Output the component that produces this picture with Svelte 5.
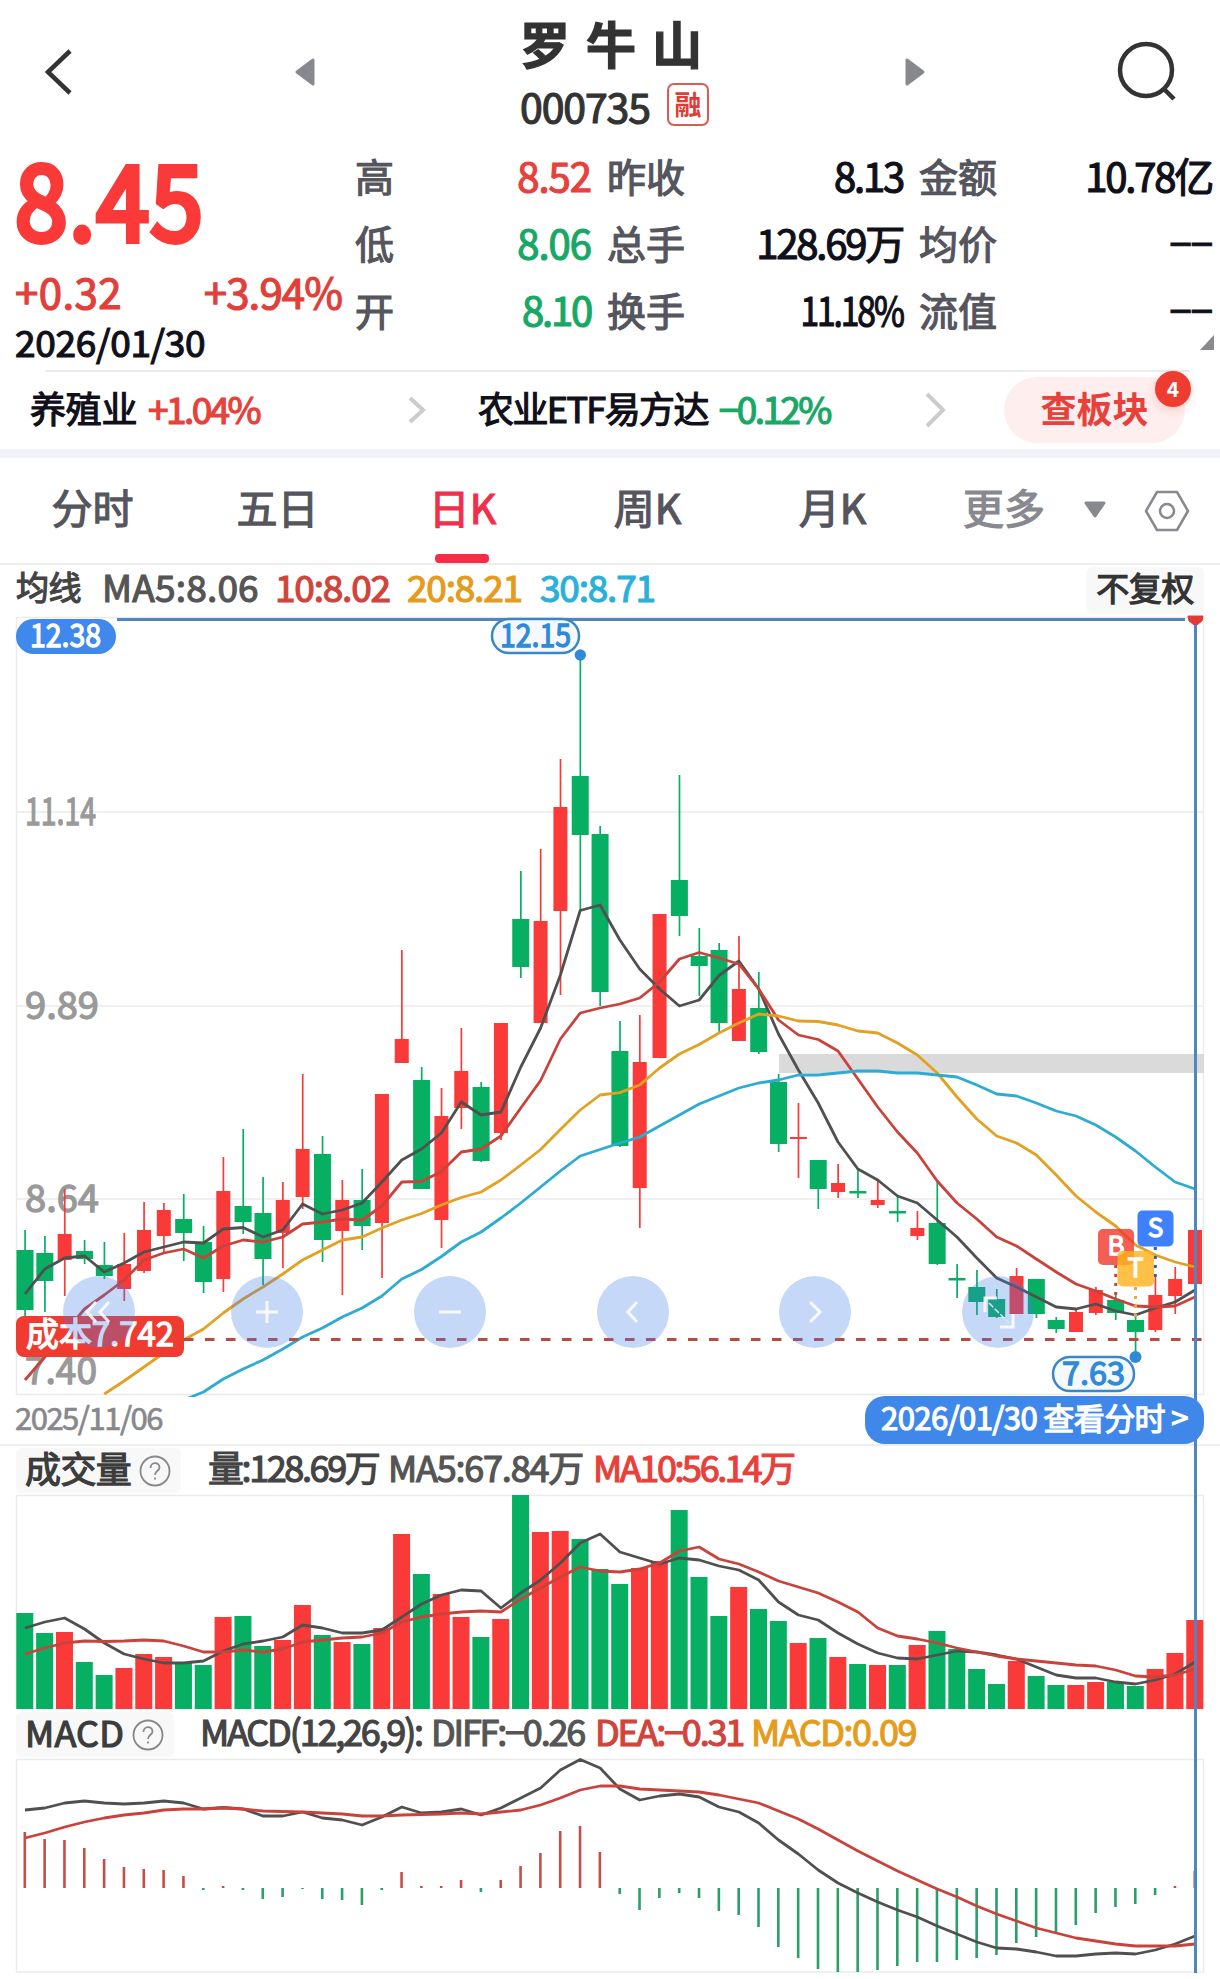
<script>
    const left = 25, step = 19.83
    const px = i => left + i * step
    const line = (list, start = 0) => list.map((y, i) => `${px(i + start).toFixed(1)},${y}`).join(" ")

    // high, body top, body bottom, low, 1 = up / 0 = down
    const candles = [
        [1230,1250,1310,1318,0],[1236,1253,1281,1312,0],[1189,1234,1260,1296,1],[1240,1251,1259,1264,0],[1242,1265,1276,1279,0],
        [1233,1264,1289,1301,1],[1202,1230,1271,1273,1],[1203,1210,1236,1252,1],[1194,1219,1233,1261,0],[1226,1242,1282,1293,0],
        [1157,1191,1279,1292,1],[1129,1206,1222,1234,0],[1177,1213,1259,1285,0],[1182,1200,1233,1268,1],[1074,1149,1197,1209,1],
        [1136,1154,1240,1262,0],[1180,1200,1231,1295,1],[1169,1200,1226,1250,0],[1094,1094,1223,1278,1],[950,1039,1063,1063,1],
        [1067,1080,1189,1189,0],[1088,1116,1220,1248,1],[1028,1071,1108,1129,1],[1082,1087,1161,1162,0],[1023,1023,1133,1140,1],
        [871,919,967,978,0],[849,921,1023,1023,1],[759,807,911,995,1],[655,776,835,910,0],[826,834,992,1006,0],
        [1021,1051,1146,1147,0],[1015,1062,1188,1228,1],[914,914,1058,1058,1],[775,880,916,936,0],[928,956,966,996,0],
        [943,950,1023,1033,0],[936,989,1041,1041,1],[972,1008,1052,1054,0],[1074,1082,1144,1152,0],[1103,1137,1139,1178,1],
        [1160,1160,1189,1209,0],[1164,1183,1192,1198,1],[1168,1191,1193.5,1198,0],[1180,1200,1205,1208,1],[1197,1211,1213.5,1222,0],
        [1211,1228,1236,1240,1],[1182,1223,1264,1265,0],[1264,1278,1280.5,1298,0],[1270,1287,1302,1315,0],[1289,1299,1317,1318,0],
        [1268,1276,1314,1314,1],[1279,1279,1314,1318,0],[1317,1320,1329,1333,0],[1310,1312,1332,1332,1],[1287,1290,1313,1315,1],
        [1293,1300,1313,1320,0],[1316,1320,1332,1357,0],[1276,1295,1330,1332,1],[1267,1279,1296,1314,1],[1230,1230,1284,1284,1]
    ]
    const ma5 = [1294,1269,1258,1256,1272,1263,1252,1247,1242,1243,1229,1227.5,1237,1230,1204,1214,1210,1203,1182,1160,1149,1133,1102,1115,1112,1067,1028,975,910.5,905,940,969,989,1006,1000,975.5,961,989,1034,1070,1103,1142,1169,1180,1196,1203,1220,1237,1258,1278,1287,1297,1307,1309,1304,1311,1315,1308,1302,1290]
    const ma10 = [1380,1357,1333,1309,1295,1280,1260,1253,1249,1258,1246,1240,1242,1237,1224,1222,1219,1220,1206,1182,1181.5,1171.5,1152,1149,1136,1108,1080.5,1039,1013,1008,1004,998,982,959,952.5,958,964,989,1020,1035,1039.5,1051,1079,1107,1132,1153,1181,1203,1219,1237,1246,1259,1272,1284,1291,1299,1306,1307,1306,1297]
    const ma20 = [1394,1381,1367,1353,1340,1329,1313,1299,1287,1274,1260,1250,1240,1237,1228,1220,1213.5,1205,1197.5,1192,1180,1165,1149.5,1129.5,1110,1095,1092.6,1085,1068,1054,1044.5,1033,1023,1014,1016,1021,1021.5,1025,1031,1033,1043,1055,1073,1097,1119,1136,1143,1155,1175,1196,1212,1226,1245,1255,1262,1267]
    const ma30 = [1400,1392,1379,1369,1360,1349,1337,1328,1317,1308,1296,1279,1269.5,1256.5,1242,1232,1218,1203,1187,1171,1156,1149.5,1143,1137,1126,1115,1104,1096,1088,1083,1080,1075,1075,1073,1071,1071,1073,1073,1075,1077,1085,1094,1096,1103,1111,1116,1125,1137,1151,1167,1182,1189]

    const volume = [1613,1633,1632,1662,1675,1668,1654,1657,1663,1665,1617,1616,1646,1640,1605,1635,1642,1644,1628,1534,1574,1594,1617,1637,1619,1495,1532,1531,1539,1569,1584,1568,1561,1510,1577,1616,1587,1609,1621,1643,1638,1657,1664,1665,1665,1645,1631,1649,1669,1684,1661,1676,1685,1685,1682,1682,1686,1669,1653,1620]
    const vol5 = [1628,1622,1618,1629,1643,1654,1659,1663,1663,1661,1651,1644,1641,1637,1625,1628,1633,1633,1630,1617,1604,1595,1590,1591,1608,1593,1580,1563,1543,1534,1552,1558,1564,1558,1560,1566,1570,1580,1602,1615,1620,1633,1644,1653,1658,1659,1655,1651,1652,1655,1659,1667,1675,1678,1678,1682,1684,1680,1674,1662]
    const vol10 = [1654,1648,1643,1641,1641.5,1641,1640,1641,1646,1652,1652,1650,1652,1649,1642,1640,1638,1637,1633,1622,1617,1614,1612,1611,1612,1599,1588,1577,1567,1571,1572,1569,1563,1551,1547,1559,1564,1572,1581,1587,1593,1602,1612,1628,1636,1639,1643,1648,1652,1656,1659,1661,1663,1665,1666,1670,1676,1677,1675,1669]

    const zero = 1888
    const macd = [1832,1839,1840,1848,1859,1867,1869,1870,1876,1890,1886,1890,1899,1897,1889,1899,1900,1905,1890,1872,1886,1886,1880,1892,1880,1866,1853,1831,1826,1852,1894,1910,1898,1893,1898,1911,1915,1927,1947,1958,1969,1972,1972,1970,1966,1962,1962,1960,1958,1955,1943,1937,1933,1925,1913,1907,1904,1895,1886,1871]
    const diff = [1810,1808,1803,1801,1803,1804,1803,1801,1803,1809,1807.5,1809,1816,1816,1812,1818,1820,1825,1817,1807,1813,1812,1809,1815,1808,1798,1788,1770,1759.5,1768,1789,1800,1796,1794,1797,1807,1812,1823,1840,1854,1870,1883,1893,1902,1910,1917,1926,1934,1942,1948,1949,1952,1956,1956,1954,1953,1954,1950,1944,1936]
    const dea = [1838,1833,1827,1822,1818,1815,1813,1810,1809,1809,1808,1809,1811,1811.5,1812,1813,1814,1816,1816,1815,1814.5,1814,1813,1814,1812,1810,1805,1798,1790,1786,1786,1789,1790,1791,1792,1795,1799,1803,1811,1819,1829,1840,1851,1861,1871,1880,1889,1897,1906,1914,1921,1928,1933,1938,1941,1944,1946,1946,1946,1944]

    const stats = [
        ["高", "8.52", "red"], ["昨收", "8.13", "snug"], ["金额", "10.78亿", "snug"],
        ["低", "8.06", "green"], ["总手", "128.69万", "snug"], ["均价", "−−", "dash"],
        ["开", "8.10", "green snug"], ["换手", "11.18%", "tight"], ["流值", "−−", "dash"]
    ]
    let tabs = ["分时", "五日", "日K", "周K", "月K"]
    let active = "日K"
    const controls = [
        { x: 99, d: "M-3 -10 L-12 0 L-3 10 M10 -10 L1 0 L10 10" },
        { x: 267, d: "M-11 0 H11 M0 -11 V11" },
        { x: 450, d: "M-11 0 H11" },
        { x: 633, d: "M4 -10 L-5 0 L4 10" },
        { x: 815, d: "M-5 -10 L5 0 L-5 10" },
        { x: 998, d: "M-13 0 V-14 H-1 M2 15 H15 V2" }
    ]
</script>

<div class="page">
    <header>
        <svg class="back" width="40" height="60" viewBox="0 0 40 60"><path d="M34 9 L12 30 L34 51" /></svg>
        <svg class="prev" width="24" height="32" viewBox="0 0 24 32"><path d="M20 4 V28 L4 16 Z" /></svg>
        <div class="title">
            <h1>罗牛山</h1>
            <div class="code"><span>000735</span><i>融</i></div>
        </div>
        <svg class="next" width="24" height="32" viewBox="0 0 24 32"><path d="M4 4 V28 L20 16 Z" /></svg>
        <svg class="search" width="64" height="64" viewBox="0 0 64 64"><circle cx="30" cy="30" r="26" /><path d="M47 48 L58 59" /></svg>
    </header>

    <section class="quote">
        <div class="last">
            <div class="price">8.45</div>
            <div class="change"><span>+0.32</span><span class="pct">+3.94%</span></div>
            <div class="day">2026/01/30</div>
        </div>
        <div class="stats">
            {#each stats as [name, value, color]}
                <span class="name">{name}</span><span class="value {color}">{value}</span>
            {/each}
        </div>
        <svg class="corner" width="14" height="15"><path d="M14 0 V15 H0 Z" /></svg>
    </section>

    <section class="sectors">
        <div class="sector"><span>养殖业</span><b class="red">+1.04%</b></div>
        <svg class="chev" width="20" height="34" viewBox="0 0 20 34"><path d="M3 5 L16 17 L3 29" /></svg>
        <div class="sector second"><span>农业ETF易方达</span><b class="green">−0.12%</b></div>
        <svg class="chev" width="24" height="38" viewBox="0 0 24 38"><path d="M4 3 L20 19 L4 35" /></svg>
        <button class="plate"><span>查板块</span><em>4</em></button>
    </section>

    <nav>
        {#each tabs as tab}
            <button class:active={tab === active}>{tab}</button>
        {/each}
        <button class="more">更多</button>
        <svg class="caret" width="24" height="20" viewBox="0 0 24 20"><path d="M3 3 H21 L12 16 Z" /></svg>
        <svg class="gear" width="48" height="44" viewBox="0 0 48 44"><path d="M14 3 H34 L45 22 L34 41 H14 L3 22 Z" /><circle cx="24" cy="22" r="7" /></svg>
    </nav>

    <div class="legend ma">
        <span class="cn">均线</span>
        <span class="grey">MA5:8.06</span>
        <span class="crimson">10:8.02</span>
        <span class="amber">20:8.21</span>
        <span class="cyan">30:8.71</span>
        <button>不复权</button>
    </div>

    <div class="charts">
        <svg class="kline" width="1220" height="782" viewBox="0 615 1220 782">
            <g class="frame">
                <rect x="16.5" y="617.5" width="1187" height="777" />
                <path d="M17 812 H1204 M17 1006 H1204 M17 1199 H1204" />
            </g>
            <rect class="gap" x="779" y="1054" width="425" height="19" />
            <g class="axis">
                <text x="25" y="825" textLength="71" lengthAdjust="spacingAndGlyphs">11.14</text>
                <text x="25" y="1019" textLength="74" lengthAdjust="spacingAndGlyphs">9.89</text>
                <text x="25" y="1212" textLength="74" lengthAdjust="spacingAndGlyphs">8.64</text>
                <text x="25" y="1384" textLength="72" lengthAdjust="spacingAndGlyphs">7.40</text>
            </g>
            {#each candles as [high, top, bottom, low, up], i}
                <g class={up ? "up" : "down"}>
                    <rect x={px(i) - 0.75} y={high} width="1.7" height={low - high} />
                    {#if up && bottom - top > 3}
                        <rect x={px(i) - 7} y={top} width="14" height={bottom - top} />
                    {:else}
                        <rect x={px(i) - 8.5} y={top} width="17" height={bottom - top} />
                    {/if}
                </g>
            {/each}
            <g class="line">
                <polyline class="l5" points={line(ma5)} />
                <polyline class="l10" points={line(ma10)} />
                <polyline class="l20" points={line(ma20, 4)} />
                <polyline class="l30" points={line(ma30, 8)} />
            </g>
            <path class="cost-line" d="M184 1339.5 H1202" />
            <rect class="cost" x="16" y="1316" width="168" height="41" rx="8" />
            <text class="cost-text" x="26" y="1346" textLength="148" lengthAdjust="spacingAndGlyphs">成本7.742</text>

            <path class="cross" d="M117 619.5 H1185" />
            <path class="pin" d="M1188 616 H1203 L1202 621 L1195.5 626 L1189 621 Z" />
            <rect class="pill" x="16" y="619" width="100" height="35" rx="17.5" />
            <text class="pill-text" x="30" y="647" textLength="71" lengthAdjust="spacingAndGlyphs">12.38</text>
            <g class="peak">
                <rect x="492" y="619" width="87" height="34" rx="17" />
                <text x="500" y="647" textLength="71" lengthAdjust="spacingAndGlyphs">12.15</text>
                <circle cx="580.3" cy="655" r="5.7" />
                <rect x="1053" y="1357" width="81" height="34" rx="17" />
                <text x="1062" y="1385" textLength="63" lengthAdjust="spacingAndGlyphs">7.63</text>
                <circle cx="1135.5" cy="1357" r="6" />
            </g>

            <g class="dots">
                <path stroke="#c8473e" d="M1115.7 1265 V1297" />
                <path stroke="#e9a93a" d="M1135.5 1287 V1317" />
                <path stroke="#2f5fae" d="M1155.3 1247 V1277" />
            </g>
            <g class="mark">
                <rect x="1098" y="1229" width="36" height="36" rx="5" fill="#f03a30" opacity=".82" />
                <text x="1116" y="1255">B</text>
                <rect x="1117.5" y="1251" width="36.5" height="35.5" rx="5" fill="#ffb21e" opacity=".82" />
                <text x="1135.5" y="1277">T</text>
                <rect x="1137.5" y="1210.5" width="36" height="36" rx="5" fill="#3f80ff" />
                <text x="1155.5" y="1237">S</text>
            </g>
            {#each controls as c}
                <g class="control" transform="translate({c.x} 1312)">
                    <circle r="36" />
                    <path d={c.d} />
                </g>
            {/each}
            <path class="resize" d="M989 1303 L1009 1323" />
        </svg>

        <div class="dates">
            <span>2025/11/06</span>
            <button>2026/01/30 查看分时 &gt;</button>
        </div>

        <div class="legend vol">
            <span class="tag"><span>成交量</span>
                <svg width="32" height="32" viewBox="0 0 32 32"><circle cx="16" cy="16" r="14.5" /><path d="M11.5 13 C11.5 6.5 20.5 6.5 20.5 12.5 C20.5 16 16 15.5 16 20" /><path d="M16 22.5 V24.5" /></svg>
            </span>
            <span class="dark">量:128.69万</span>
            <span class="grey">MA5:67.84万</span>
            <span class="red">MA10:56.14万</span>
        </div>
        <svg width="1220" height="216" viewBox="0 1494 1220 216">
            <rect class="box" x="16.5" y="1495.5" width="1187" height="213" />
            {#each volume as y, i}
                <rect class={candles[i][4] ? "up" : "down"} x={px(i) - 8.7} {y} width="17" height={1709 - y} />
            {/each}
            <g class="line">
                <polyline class="l5" points={line(vol5)} />
                <polyline class="l10" points={line(vol10)} />
            </g>
        </svg>

        <div class="legend osc">
            <span class="tag"><span>MACD</span>
                <svg width="32" height="32" viewBox="0 0 32 32"><circle cx="16" cy="16" r="14.5" /><path d="M11.5 13 C11.5 6.5 20.5 6.5 20.5 12.5 C20.5 16 16 15.5 16 20" /><path d="M16 22.5 V24.5" /></svg>
            </span>
            <span class="dark">MACD(12,26,9):</span>
            <span class="grey">DIFF:−0.26</span>
            <span class="crimson">DEA:−0.31</span>
            <span class="amber">MACD:0.09</span>
        </div>
        <svg width="1220" height="216" viewBox="0 1758 1220 216">
            <rect class="box" x="16.5" y="1759.5" width="1187" height="212.5" />
            {#each macd as y, i}
                <rect class={y < zero ? "up thin" : "down thin"} x={px(i) - 1.5} y={Math.min(y, zero)} width="2.6" height={Math.abs(y - zero)} />
            {/each}
            <g class="line">
                <polyline class="l5" points={line(diff)} />
                <polyline class="l10" points={line(dea)} />
            </g>
        </svg>
        <div class="cursor"></div>
    </div>
</div>

<style>
    :global(body){
        background: #fff;
    }
    .page{
        width: 1220px;
        height: 1979px;
        overflow: hidden;
        background: #fff;
        font-family: "Noto Sans CJK SC", "Noto Sans", sans-serif;
        color: #10101a;
        -webkit-text-stroke: 1.2px currentColor;
    }
    svg{
        display: block;
        flex: none;
    }
    button{
        font: inherit;
        color: inherit;
        background: none;
        border: 0;
        padding: 0;
        letter-spacing: inherit;
        white-space: nowrap;
        -webkit-text-stroke: inherit;
    }
    .red{ color: #e8403b; }
    .green{ color: #17a866; }
    .crimson{ color: #d0443c; }
    .amber{ color: #e59c1c; }
    .cyan{ color: #2bb0da; }
    .grey{ color: #555; }
    .dark{ color: #444; }

    header{
        display: flex;
        height: 144px;
        align-items: center;
        padding: 0 40px 0 36px;
    }
    header svg{
        fill: none;
        stroke: #333;
        stroke-width: 4.5;
    }
    header .prev, header .next{
        fill: #88888f;
        stroke: #88888f;
        stroke-width: 3;
        stroke-linejoin: round;
    }
    .prev{
        margin-left: 217px;
    }
    .title{
        margin-left: 203px;
        width: 190px;
        height: 144px;
        display: flex;
        flex-direction: column;
    }
    h1{
        margin: 5px 0 0 0;
        font-size: 50px;
        line-height: 74px;
        font-weight: bold;
        letter-spacing: 16px;
        color: #333;
        white-space: nowrap;
    }
    .code{
        display: flex;
        align-items: center;
        height: 52px;
        font-size: 41px;
        letter-spacing: -1.1px;
        color: #333;
    }
    .code i{
        font-style: normal;
        font-size: 27px;
        font-weight: bold;
        line-height: 37px;
        height: 39px;
        width: 38px;
        text-align: center;
        letter-spacing: 0;
        color: #e23b36;
        border: 2px solid #dc5a54;
        border-radius: 7px;
        margin: -1px 0 0 17px;
        -webkit-text-stroke: 0;
    }
    .next{
        margin-left: 193px;
    }
    .search{
        margin-left: auto;
    }

    .quote{
        position: relative;
        display: flex;
        height: 226px;
        padding-left: 15px;
    }
    .last{
        width: 340px;
        color: #e23f3a;
    }
    .price{
        height: 121px;
        line-height: 103px;
        width: 220px;
        font-size: 104px;
        letter-spacing: 1.5px;
        transform: scaleX(.91);
        transform-origin: 0 0;
        color: #fa3a38;
        -webkit-text-stroke: 6px currentColor;
    }
    .change{
        display: flex;
        justify-content: space-between;
        width: 327px;
        height: 51px;
        line-height: 52px;
        font-size: 42px;
        letter-spacing: .4px;
    }
    .pct{
        letter-spacing: -.9px;
    }
    .day{
        line-height: 50px;
        font-size: 37px;
        letter-spacing: -.3px;
        color: #10101a;
    }
    .stats{
        display: grid;
        grid-template-columns: 36px 200px 94px 218px 94px 215px;
        grid-auto-rows: 67px;
        line-height: 62px;
        font-size: 39px;
        white-space: nowrap;
        justify-items: end;
    }
    .name{
        justify-self: start;
        color: #55555e;
        padding-left: 16px;
    }
    .name:nth-child(6n + 1){
        padding-left: 0;
    }
    .value{
        font-size: 40px;
        letter-spacing: -1px;
    }
    .snug{
        letter-spacing: -2.2px;
    }
    .tight{
        letter-spacing: -2.5px;
        transform: scaleX(.84);
        transform-origin: 100% 0;
    }
    .corner{
        position: absolute;
        right: 6px;
        bottom: 20px;
        fill: #88888f;
    }

    .sectors{
        display: flex;
        align-items: center;
        height: 79px;
        padding-left: 30px;
        font-size: 36px;
        background: linear-gradient(#ededf0, #ededf0) 45px 0 / 1145px 2px no-repeat;
    }
    .sector{
        display: flex;
        width: 377px;
        gap: 11px;
        letter-spacing: -.3px;
        white-space: nowrap;
        padding-bottom: 4px;
    }
    .sector.second{
        width: 445px;
        margin-left: 51px;
        letter-spacing: -1.6px;
    }
    .sector b{
        font-weight: normal;
        font-size: 37px;
        letter-spacing: -2.6px;
    }
    .chev{
        fill: none;
        stroke: #ccc;
        stroke-width: 4;
    }
    .plate{
        position: relative;
        width: 181px;
        height: 66px;
        margin-left: 57px;
        border-radius: 33px;
        background: #feeeed;
        color: #e8403b;
        font-weight: bold;
        padding-bottom: 5px;
        -webkit-text-stroke: 0;
    }
    .plate em{
        position: absolute;
        right: -6px;
        top: -6px;
        width: 36px;
        line-height: 34px;
        height: 36px;
        border-radius: 50%;
        background: #ef3c31;
        box-shadow: 0 3px 10px rgba(240, 60, 50, .2);
        color: #fff;
        font-size: 21px;
        font-style: normal;
    }

    nav{
        display: flex;
        height: 105px;
        border-top: 9px solid #f2f3f8;
        border-bottom: 2px solid #eee;
        align-items: stretch;
        padding-left: 0;
    }
    nav button{
        position: relative;
        width: 185px;
        padding-bottom: 9px;
        font-size: 41px;
        color: #55555e;
    }
    nav .active{
        color: #f0304a;
    }
    nav .active::after{
        content: "";
        position: absolute;
        left: 65px;
        bottom: 0;
        width: 54px;
        height: 9px;
        border-radius: 4px;
        background: #f82c47;
    }
    nav .more{
        width: 158px;
        color: #88888f;
    }
    .caret{
        margin: 42px 0 0 0;
        fill: #88888f;
        stroke: #88888f;
        stroke-width: 3;
        stroke-linejoin: round;
    }
    .gear{
        margin: 31px 0 0 36px;
        fill: none;
        stroke: #88888f;
        stroke-width: 2.5;
        stroke-linejoin: round;
    }

    .legend{
        display: grid;
        align-items: center;
        white-space: nowrap;
        padding-left: 16px;
        font-size: 37px;
        line-height: 40px;
        letter-spacing: -1.2px;
    }
    .legend > span:not(.tag){
        padding-bottom: 9px;
    }
    .ma{
        height: 50px;
        grid-template-columns: 86px 173px 132px 133px 546px 118px;
    }
    .ma .grey{
        letter-spacing: .2px;
    }
    .ma .cn{
        font-size: 33px;
        letter-spacing: -.5px;
        color: #444;
    }
    .ma button{
        height: 47px;
        font-size: 33px;
        letter-spacing: -.5px;
        color: #333;
        background: #f8f8f8;
        border-radius: 6px;
        padding-bottom: 7px;
    }
    .charts{
        position: relative;
    }
    .kline{
        overflow: hidden;
    }
    .frame, .box{
        fill: none;
        stroke: #ebebeb;
        stroke-width: 1.5;
    }
    .gap{
        fill: #dadada;
    }
    svg text{
        font-size: 38px;
        stroke-width: 1.3;
    }
    .axis{
        fill: #999;
        stroke: #999;
    }
    .up{
        fill: #f93a38;
    }
    .down{
        fill: #06af62;
    }
    .up.thin{
        fill: #c74e48;
    }
    .down.thin{
        fill: #2b9f6a;
    }
    .line{
        fill: none;
        stroke-width: 2.8;
        stroke-linejoin: round;
    }
    .l5{ stroke: #505050; }
    .l10{ stroke: #c9423b; }
    .l20{ stroke: #e4a021; }
    .l30{ stroke: #2cabd3; }
    .cost-line{
        stroke: #b94a42;
        stroke-width: 3;
        stroke-dasharray: 9.5 11.5;
    }
    .cost{
        fill: #ef3b30;
    }
    .cost-text, .pill-text{
        fill: #fff;
        stroke: #fff;
    }
    svg .cost-text{
        font-size: 33px;
    }
    svg .pill-text, svg .peak text{
        font-size: 32px;
    }
    .cross{
        stroke: #4f86c2;
        stroke-width: 3;
    }
    .pin{
        fill: #e23b36;
        stroke: #e23b36;
        stroke-linejoin: round;
    }
    .pill{
        fill: #3f88ec;
    }
    .peak rect{
        fill: #f5f9fd;
        stroke: #3b86c6;
        stroke-width: 2.5;
    }
    .peak text, .peak circle{
        fill: #2f8ad8;
    }
    .peak text{
        stroke: #2f8ad8;
    }
    .dots{
        fill: none;
        stroke-width: 3;
        stroke-dasharray: 3 6;
    }
    .mark text{
        fill: #fff;
        stroke: #fff;
        font-size: 26px;
        text-anchor: middle;
    }
    .control circle{
        fill: #417fe8;
        fill-opacity: .3;
    }
    .control path{
        fill: none;
        stroke: #fff;
        stroke-opacity: .85;
        stroke-width: 3;
    }
    .resize{
        stroke: #d6ece8;
        stroke-width: 1.5;
        stroke-dasharray: 6 2;
    }

    .dates{
        display: flex;
        justify-content: space-between;
        height: 48px;
        border-bottom: 2px solid #eee;
        margin: -1px 0 0 0;
        padding: 0 16px 0 15px;
        font-size: 31px;
        line-height: 42px;
        letter-spacing: -1.5px;
        color: #88888c;
        -webkit-text-stroke-width: .7px;
    }
    .dates button{
        position: relative;
        z-index: 2;
        width: 339px;
        height: 48px;
        border-radius: 20px;
        background: #3f88ea;
        color: #fff;
        font-size: 31px;
        letter-spacing: -.6px;
        padding-bottom: 6px;
        -webkit-text-stroke: 1.2px #fff;
    }
    .vol{
        height: 48px;
        font-size: 36px;
        grid-template-columns: 192px 180px 205px 300px;
    }
    .vol .dark, .vol .red{
        letter-spacing: -2.4px;
    }
    .osc{
        height: 48px;
        font-size: 36px;
        letter-spacing: -2.2px;
        grid-template-columns: 184px 231px 164px 156px 300px;
    }
    .osc .amber{
        letter-spacing: -1.5px;
    }
    .tag{
        display: flex;
        align-items: center;
        justify-self: start;
        gap: 8px;
        height: 45px;
        padding: 0 10px 0 9px;
        background: #f8f8f8;
        border-radius: 6px;
        color: #3c3c3c;
        letter-spacing: -.6px;
    }
    .tag span{
        padding-bottom: 8px;
    }
    .tag svg{
        fill: none;
        stroke: #88888c;
        stroke-width: 1.8;
    }
    .osc .tag{
        letter-spacing: .2px;
    }
    .cursor{
        position: absolute;
        left: 1194px;
        top: 10px;
        width: 3px;
        height: 1348px;
        background: #4f86c2;
    }
</style>
